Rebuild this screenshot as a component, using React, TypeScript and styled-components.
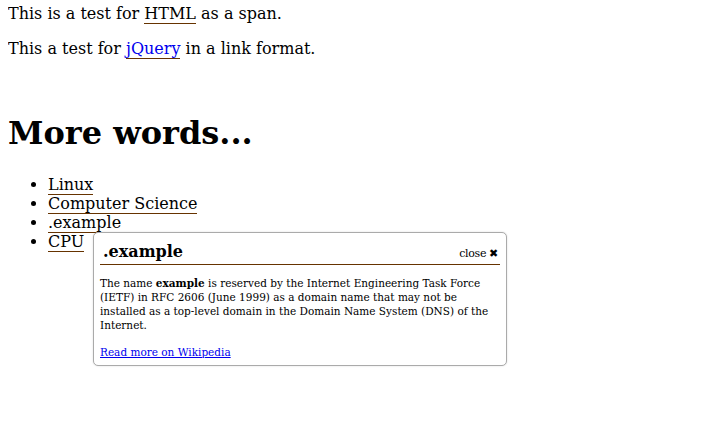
import React from "react";
import styled, { createGlobalStyle } from "styled-components";

const Global = createGlobalStyle`
  html, body {
    background: #fff;
  }
  body {
    margin: 4px 8px 8px 8px;
    font-family: "DejaVu Serif", serif;
    font-size: 16px;
    color: #000;
  }
`;

const Page = styled.div`
  position: relative;
  min-height: 432px;
`;

const Para = styled.p`
  margin: 0 0 16px 0;
  line-height: 19px;
`;

const Term = styled.span`
  border-bottom: 1px solid #663300;
`;

const TermLink = styled.a`
  color: #0000ee;
  text-decoration: none;
  border-bottom: 1px solid #663300;
`;

const Heading = styled.h1`
  font-size: 32px;
  font-weight: bold;
  line-height: 37px;
  margin: 57px 0 23px 0;
`;

const List = styled.ul`
  margin: 0;
  padding-left: 40px;
  line-height: 19px;
`;

const Item = styled.li`
  line-height: 19px;
`;

const Popup = styled.div`
  position: absolute;
  left: 85px;
  top: 228px;
  width: 400px;
  padding: 8px 6px 6px 6px;
  border: 1px solid #aaa;
  border-radius: 5px;
  background: #fff;
  box-shadow: 0 0 2px rgba(0, 0, 0, 0.15);
`;

const PopupHeader = styled.div`
  display: flex;
  align-items: baseline;
  justify-content: space-between;
  border-bottom: 1px solid #663300;
  padding: 0 2px 1px 3px;
`;

const PopupTitle = styled.h3`
  margin: 0;
  font-size: 16px;
  font-weight: bold;
  line-height: 22px;
`;

const Close = styled.span`
  font-size: 11px;
  color: #000;
  letter-spacing: -0.3px;
`;

const PopupBody = styled.div`
  font-size: 10.5px;
  line-height: 14px;
  padding-top: 11px;
`;

const BodyPara = styled.p`
  margin: 0 0 13px 0;
  &:last-child {
    margin-bottom: 0;
  }
`;

const WikiLink = styled.a`
  color: #0000ee;
  text-decoration: underline;
`;

export default function App() {
  return (
    <Page>
      <Global />
      <Para>
        This is a test for <Term>HTML</Term> as a span.
      </Para>
      <Para>
        This a test for <TermLink href="#">jQuery</TermLink> in a link format.
      </Para>
      <Heading>More words...</Heading>
      <List>
        <Item>
          <Term>Linux</Term>
        </Item>
        <Item>
          <Term>Computer Science</Term>
        </Item>
        <Item>
          <Term>.example</Term>
        </Item>
        <Item>
          <Term>CPU</Term>
        </Item>
      </List>
      <Popup>
        <PopupHeader>
          <PopupTitle>.example</PopupTitle>
          <Close>close ✖</Close>
        </PopupHeader>
        <PopupBody>
          <BodyPara>
            The name <b>example</b> is reserved by the Internet Engineering Task
            Force (IETF) in RFC 2606 (June 1999) as a domain name that may not be
            installed as a top-level domain in the Domain Name System (DNS) of
            the Internet.
          </BodyPara>
          <BodyPara>
            <WikiLink href="#">Read more on Wikipedia</WikiLink>
          </BodyPara>
        </PopupBody>
      </Popup>
    </Page>
  );
}
